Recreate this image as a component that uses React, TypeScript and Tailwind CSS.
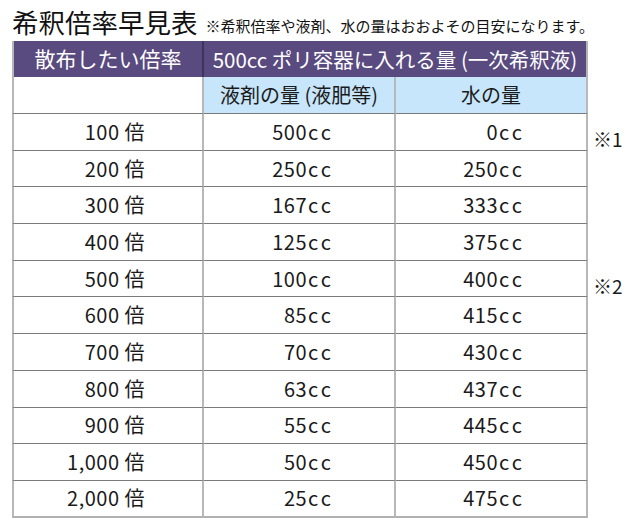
import React from "react";

const rows: [string, string, string][] = [
  ["100", "500", "0"],
  ["200", "250", "250"],
  ["300", "167", "333"],
  ["400", "125", "375"],
  ["500", "100", "400"],
  ["600", "85", "415"],
  ["700", "70", "430"],
  ["800", "63", "437"],
  ["900", "55", "445"],
  ["1,000", "50", "450"],
  ["2,000", "25", "475"],
];

const notes: Record<number, string> = { 0: "※1", 4: "※2" };

function CC({ n }: { n: string }) {
  return (
    <span className="tracking-[0.5px]">
      {n}
      <span className="tracking-[3px] ml-[1px]">cc</span>
    </span>
  );
}

export default function App() {
  return (
    <div
      className="w-[630px] h-[530px] bg-white text-[#1a1a1a] overflow-hidden"
      style={{ fontFamily: '"Noto Sans CJK JP", "Noto Sans", sans-serif' }}
    >
      <div className="flex items-end h-[41px] pl-[12px] pb-[4px]">
        <span className="text-[26.5px] leading-[30px] text-[#111]">希釈倍率早見表</span>
        <span className="text-[15px] leading-[18px] ml-[8px] mb-[2px] text-[#111]">
          ※希釈倍率や液剤、水の量はおおよその目安になります。
        </span>
      </div>
      <div className="grid grid-cols-[12px_192px_192px_192px_42px]">
        {/* header */}
        <div />
        <div className="h-[36px] bg-[#594a80] border-l-2 border-[#b5b5b5] border-r-2 border-r-[#3d335e] flex items-center justify-center text-white text-[21px]">
          散布したい倍率
        </div>
        <div className="col-span-2 h-[36px] bg-[#594a80] border-r-2 border-[#b5b5b5] flex items-center justify-center text-white text-[20.5px] whitespace-nowrap">
          500cc ポリ容器に入れる量 (一次希釈液)
        </div>
        <div />
        {/* sub header */}
        <div />
        <div className="h-[37px] bg-white border-l-2 border-r-2 border-[#b8b8b8] border-b border-b-[#7a7a7a]" />
        <div className="h-[37px] bg-[#c8e6fb] border-r-2 border-[#b8b8b8] border-b border-b-[#7a7a7a] flex items-center justify-center text-[20px]">
          液剤の量 (液肥等)
        </div>
        <div className="h-[37px] bg-[#c8e6fb] border-r-2 border-[#b8b8b8] border-b border-b-[#7a7a7a] flex items-center justify-center text-[20px]">
          水の量
        </div>
        <div />
        {rows.map((r, i) => {
          const last = i === rows.length - 1;
          const bb = last ? "border-b-2 border-b-[#b0b0b0]" : "border-b border-b-[#7a7a7a]";
          return (
            <React.Fragment key={i}>
              <div />
              <div
                className={`h-[36.7px] border-l-2 border-r-2 border-[#b8b8b8] ${bb} flex items-center justify-end pr-[57px] text-[20px]`}
              >
                <span className="tracking-[0.5px]">
                  {r[0]}
                  <span className="ml-[5px]">倍</span>
                </span>
              </div>
              <div
                className={`h-[36.7px] border-r-2 border-[#b8b8b8] ${bb} flex items-center justify-end pr-[60px] text-[20px]`}
              >
                <CC n={r[1]} />
              </div>
              <div
                className={`h-[36.7px] border-r-2 border-[#b8b8b8] ${bb} flex items-center justify-end pr-[61px] text-[20px]`}
              >
                <CC n={r[2]} />
              </div>
              <div className="h-[36.7px] pl-[5px] pt-[14px] text-[19px] leading-[22px]">
                {notes[i] ?? ""}
              </div>
            </React.Fragment>
          );
        })}
      </div>
    </div>
  );
}
